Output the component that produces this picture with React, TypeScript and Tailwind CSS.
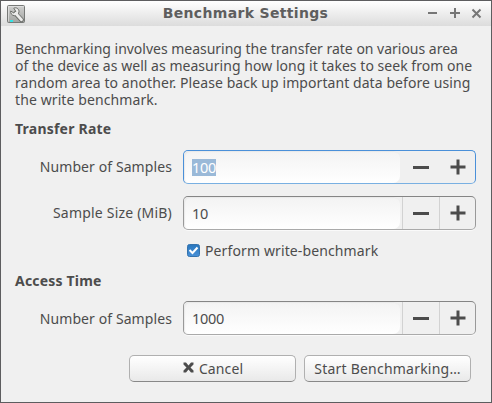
import React from "react";

function Minus() {
  return (
    <svg width="16" height="16" viewBox="0 0 16 16" shapeRendering="crispEdges">
      <path d="M0 7h16v3H0z" fill="#4c4c4c" />
    </svg>
  );
}

function Plus() {
  return (
    <svg width="16" height="16" viewBox="0 0 16 16">
      <path d="M6.5 0.5h3v6h6v3h-6v6h-3v-6h-6v-3h6z" fill="#4c4c4c" />
    </svg>
  );
}

function ToolIcon() {
  return (
    <svg width="18" height="18" viewBox="0 0 18 18">
      <defs>
        <linearGradient id="plate" x1="0" y1="0" x2="0" y2="1">
          <stop offset="0" stopColor="#d0d0cf" />
          <stop offset="1" stopColor="#a2a4a1" />
        </linearGradient>
      </defs>
      <rect x="0.5" y="0.5" width="17" height="17" rx="1" fill="url(#plate)" stroke="#777977" />
      <path d="M1.5 16.5v-15h15" fill="none" stroke="#e5e5e5" strokeWidth="0.7" />
      <path d="M8.5 8.5l6 6.3" stroke="#6b6d69" strokeWidth="4.6" strokeLinecap="round" />
      <path
        d="M6.8 3.2C9 2 11.8 3.6 12 6.3c.1 2.6-2 4.600-4.600 4.400C5 10.500 3.300 8.500 3.700 6l3 1.900 2.100-1.500z"
        fill="#ececeb"
        stroke="#6b6d69"
        strokeWidth="1"
      />
      <path d="M8.8 8.5l5.700 6.200" stroke="#ececeb" strokeWidth="2.8" strokeLinecap="round" />
      <rect x="3" y="15" width="3" height="2" fill="#35e5e5" />
    </svg>
  );
}

function SpinEntry({ value, focused = false }: { value: string; focused?: boolean }) {
  return (
    <div
      className={
        "flex h-[34px] w-[293px] rounded-[5px] border bg-[#f0f0f0] " +
        (focused
          ? "border-[#4a90d9] border-b-[#79b0e2]"
          : "border-[#999] border-t-[#858585] border-b-[#aaa] shadow-[0_1px_0_#fafafa]")
      }
    >
      <div className="flex w-[216px] items-center rounded-[5px] rounded-r-[7px] bg-linear-to-b from-[#f3f3f3] to-white pl-[8px] shadow-[inset_1px_1px_1px_#e9e9e9]">
        <span
          className={
            "block h-[17px] text-[14.5px] leading-[17px] tracking-[-0.29px] " +
            (focused ? "bg-[#9ab9d8] text-white" : "")
          }
        >
          {value}
        </span>
      </div>
      <div
        className={
          "ml-[2px] flex w-[37px] items-center justify-center border-l pr-px " +
          (focused ? "border-transparent" : "border-[#d2d2d2]")
        }
      >
        <Minus />
      </div>
      <div
        className={
          "flex flex-1 items-center justify-center border-l pl-px " +
          (focused ? "border-transparent" : "border-[#d2d2d2]")
        }
      >
        <Plus />
      </div>
    </div>
  );
}

export default function App() {
  return (
    <div className="flex h-[403px] w-[492px] flex-col overflow-hidden border border-[#5d5d5f] bg-[#f0f0f0] font-['Noto_Sans',sans-serif] text-[14px] leading-[17px] whitespace-nowrap text-[#4c4c4c]">
      <header className="flex h-[25px] shrink-0 items-center bg-linear-to-b from-white to-[#dcdcdc] pr-[9px] pl-[6px]">
        <ToolIcon />
        <h1 className="flex-1 pb-px pl-[38px] text-center font-['DejaVu_Sans',sans-serif] text-[14px] font-bold tracking-[0.33px] text-[#5e5e5e]">
          Benchmark Settings
        </h1>
        <svg width="54" height="12" viewBox="0 0 54 12" fill="none" stroke="#767676" strokeWidth="2">
          <path d="M0 5h9M22 5h10M27 0v10" shapeRendering="crispEdges" />
          <path d="M44.500 1.500l8 8M52.500 1.500l-8 8" />
        </svg>
      </header>

      <main className="pt-[14px] pl-[14px]">
        <div>
          <p className="tracking-[-0.015px]">Benchmarking involves measuring the transfer rate on various area</p>
          <p className="tracking-[0.035px]">of the device as well as measuring how long it takes to seek from one</p>
          <p className="tracking-[0.075px]">random area to another. Please back up important data before using</p>
          <p className="tracking-[0.1px]">the write benchmark.</p>
        </div>

        <h2 className="mt-[12px] font-bold tracking-[0.22px]">Transfer Rate</h2>
        <div className="mt-[13px] flex items-center">
          <label className="mr-[11px] w-[157px] pb-[2px] text-right tracking-[0.09px]">Number of Samples</label>
          <SpinEntry value="100" focused />
        </div>
        <div className="mt-[12px] flex items-center">
          <label className="mr-[11px] w-[157px] pb-[2px] text-right tracking-[0.2px]">Sample Size (MiB)</label>
          <SpinEntry value="10" />
        </div>
        <div className="mt-[12px] ml-[172px] flex h-[17px] items-center">
          <svg width="13" height="13" viewBox="0 0 13 13">
            <defs>
              <linearGradient id="check" x1="0" y1="0" x2="0" y2="1">
                <stop offset="0" stopColor="#2876bd" />
                <stop offset="1" stopColor="#4991d8" />
              </linearGradient>
            </defs>
            <rect x="0.5" y="0.5" width="12" height="12" rx="2" fill="url(#check)" stroke="#3573ad" />
            <path d="M2.5 6l3 3 5-5.5" fill="none" stroke="white" strokeWidth="2" />
          </svg>
          <label className="ml-[5px] tracking-[0.12px]">Perform write-benchmark</label>
        </div>

        <h2 className="mt-[13px] font-bold tracking-[0.2px]">Access Time</h2>
        <div className="mt-[12px] flex items-center">
          <label className="mr-[11px] w-[157px] text-right tracking-[0.09px]">Number of Samples</label>
          <SpinEntry value="1000" />
        </div>

        <footer className="mt-[19px] ml-[114px] flex gap-[8px] pt-px">
          <button className="flex h-[27px] w-[167px] items-center justify-center gap-[5px] rounded-[5px] border border-[#b0b0b0] border-b-[#888] bg-linear-to-b from-white to-[#e9e9e9] pl-px tracking-[0.1px]">
            <svg width="11" height="11" viewBox="0 0 11 11" className="mb-[2px]">
              <path d="M0.500 0.500H3l2.500 3 2.500-3h2.500V2.500L7.500 5.500l3 3v2H8l-2.500-3-2.500 3H0.500v-2l3-3-3-3z" fill="#4c4c4c" />
            </svg>
            Cancel
          </button>
          <button className="flex h-[27px] w-[167px] items-center justify-center rounded-[5px] border border-[#b0b0b0] border-b-[#888] bg-linear-to-b from-white to-[#e9e9e9] tracking-[0.22px]">
            Start Benchmarking…
          </button>
        </footer>
      </main>
    </div>
  );
}
